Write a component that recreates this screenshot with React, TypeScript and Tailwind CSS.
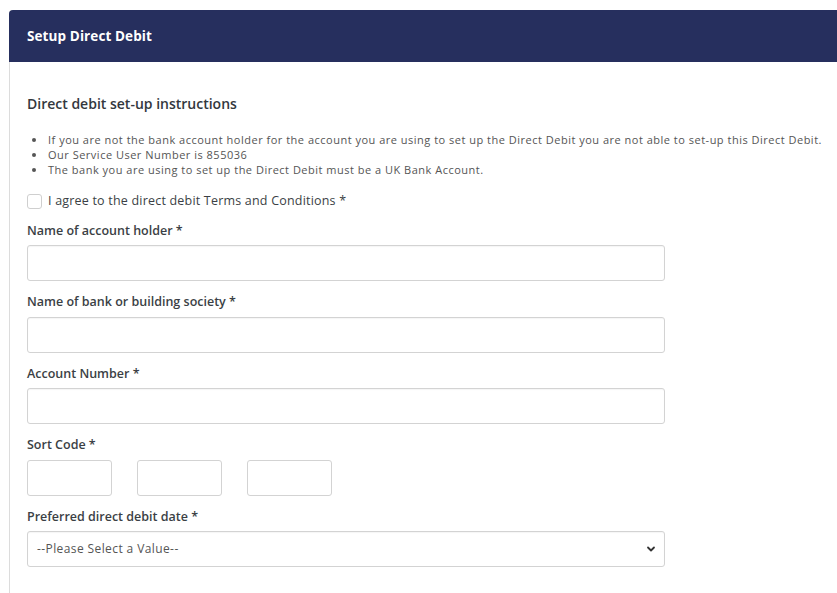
import React from 'react';

const labelCls = "block text-[12.5px] font-semibold text-[#3b3f45] leading-none";
const inputCls = "block w-[638px] h-[36px] rounded-[3px] border border-[#d3d3d3] bg-white shadow-[inset_0_1px_1px_rgba(0,0,0,0.04)]";

const TextField: React.FC<{ label: string; mt: string }> = ({ label, mt }) => (
  <div className={mt}>
    <label className={labelCls}>{label}</label>
    <input type="text" className={`${inputCls} mt-[8px]`} />
  </div>
);

const App: React.FC = () => {
  const bullets = [
    'If you are not the bank account holder for the account you are using to set up the Direct Debit you are not able to set-up this Direct Debit.',
    'Our Service User Number is 855036',
    'The bank you are using to set up the Direct Debit must be a UK Bank Account.',
  ];

  return (
    <div className="w-[837px] h-[593px] overflow-hidden bg-white pt-[10px] pl-[9px]" style={{ fontFamily: '"Open Sans", "Noto Sans", sans-serif' }}>
      <div className="w-[840px] h-[600px] border-l border-[#dcdcdc] rounded-tl-[4px]">
        <div className="h-[52px] bg-[#262f5e] rounded-tl-[4px] flex items-center pl-[18px] -ml-px">
          <h1 className="text-white text-[13.5px] font-bold tracking-[0.1px]">Setup Direct Debit</h1>
        </div>

        <div className="pl-[17px] pt-[35px]">
          <h2 className="text-[14px] font-semibold text-[#33373d] leading-none">Direct debit set-up instructions</h2>

          <ul className="mt-[21px] pl-[20px] text-[11px] tracking-[0.5px] text-[#555] leading-[15px] list-disc">
            {bullets.map((b, i) => (
              <li key={i} className="pl-[1px]">{b}</li>
            ))}
          </ul>

          <div className="flex items-center mt-[15px]">
            <input type="checkbox" className="appearance-none w-[15px] h-[15px] rounded-[3px] border border-[#cfcfcf] bg-white" />
            <span className="ml-[6px] text-[12.5px] tracking-[0.2px] text-[#3b3f45]">I agree to the direct debit Terms and Conditions *</span>
          </div>

          <TextField label="Name of account holder *" mt="mt-[14px]" />
          <TextField label="Name of bank or building society *" mt="mt-[15px]" />
          <TextField label="Account Number *" mt="mt-[15px]" />

          <div className="mt-[15px]">
            <label className={labelCls}>Sort Code *</label>
            <div className="flex gap-[25px] mt-[8px]">
              {[0, 1, 2].map((i) => (
                <input key={i} type="text" className="block w-[85px] h-[36px] rounded-[3px] border border-[#d3d3d3] bg-white" />
              ))}
            </div>
          </div>

          <div className="mt-[15px]">
            <label className={labelCls}>Preferred direct debit date *</label>
            <div className={`${inputCls} mt-[8px] flex items-center justify-between px-[9px]`}>
              <span className="text-[12px] tracking-[0.4px] text-[#555]">--Please Select a Value--</span>
              <svg width="10" height="10" viewBox="0 0 10 10" className="mr-[-1px]">
                <path d="M2 3.5 L5 6.5 L8 3.5" fill="none" stroke="#333" strokeWidth="1.8" strokeLinecap="round" strokeLinejoin="round" />
              </svg>
            </div>
          </div>
        </div>
      </div>
    </div>
  );
};

export default App;
